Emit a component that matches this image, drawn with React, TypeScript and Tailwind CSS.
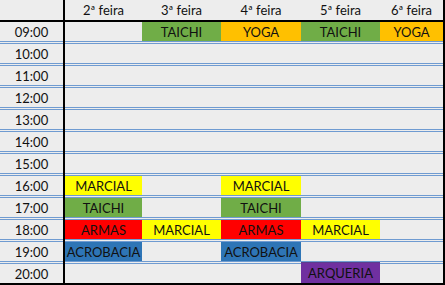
import React from "react";

type Slot = { label: string; color: string } | null;

const days = ["2ª feira", "3ª feira", "4ª feira", "5ª feira", "6ª feira"];

const TAICHI = { label: "TAICHI", color: "bg-[#70ad47]" };
const YOGA = { label: "YOGA", color: "bg-[#ffc000]" };
const MARCIAL = { label: "MARCIAL", color: "bg-[#ffff00]" };
const ARMAS = { label: "ARMAS", color: "bg-[#ff0000]" };
const ACRO = { label: "ACROBACIA", color: "bg-[#2e75b6]" };
const ARQUERIA = { label: "ARQUERIA", color: "bg-[#7030a0]" };

const rows: { time: string; slots: Slot[] }[] = [
  { time: "09:00", slots: [null, TAICHI, YOGA, TAICHI, YOGA] },
  { time: "10:00", slots: [null, null, null, null, null] },
  { time: "11:00", slots: [null, null, null, null, null] },
  { time: "12:00", slots: [null, null, null, null, null] },
  { time: "13:00", slots: [null, null, null, null, null] },
  { time: "14:00", slots: [null, null, null, null, null] },
  { time: "15:00", slots: [null, null, null, null, null] },
  { time: "16:00", slots: [MARCIAL, null, MARCIAL, null, null] },
  { time: "17:00", slots: [TAICHI, null, TAICHI, null, null] },
  { time: "18:00", slots: [ARMAS, MARCIAL, ARMAS, MARCIAL, null] },
  { time: "19:00", slots: [ACRO, null, ACRO, null, null] },
  { time: "20:00", slots: [null, null, null, ARQUERIA, null] },
];

const cols = "grid grid-cols-[77px_79px_80px_79px_63px]";

export default function App() {
  return (
    <div className="w-[445px] h-[285px] bg-[#ededed] text-[13px] leading-none text-[#111] font-['Lato',sans-serif] flex border-r-2 border-b-2 border-black">
      {/* time column */}
      <div className="w-[63px] flex flex-col">
        <div className="h-[22px] border-b-2 border-black" />
        {rows.map((r, i) => (
          <div
            key={r.time}
            className={
              i < rows.length - 1
                ? "h-[22px] border-b-[3px] border-double border-[#6f9bd1] flex items-center justify-center pt-px"
                : "h-[19px] flex items-center justify-center pt-px"
            }>
            {r.time}
          </div>
        ))}
      </div>
      <div className="w-[2px] bg-black" />
      {/* days */}
      <div className="flex-1 flex flex-col">
        <div className={`${cols} h-[22px] border-b-2 border-black`}>
          {days.map((d) => (
            <div key={d} className="flex items-center justify-center">
              {d}
            </div>
          ))}
        </div>
        {rows.map((r, i) => (
          <div
            key={r.time}
            className={
              i < rows.length - 1
                ? `${cols} h-[22px] border-b-[3px] border-double border-[#6f9bd1]`
                : `${cols} h-[19px]`
            }>
            {r.slots.map((s, j) =>
              s ? (
                <div
                  key={j}
                  className={
                    s === ARQUERIA
                      ? `${s.color} -mt-[2px] h-[21px] border-t border-[#5a3d8c] flex items-center justify-center pt-px`
                      : `${s.color} flex items-center justify-center pt-px`
                  }>
                  {s.label}
                </div>
              ) : (
                <div key={j} />
              )
            )}
          </div>
        ))}
      </div>
    </div>
  );
}
